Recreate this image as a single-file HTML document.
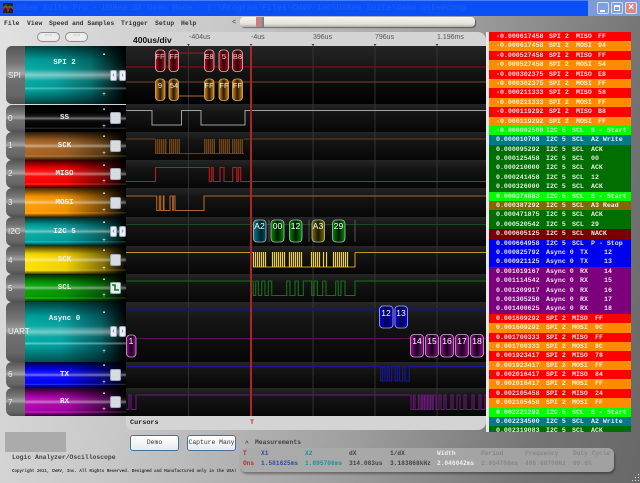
<!DOCTYPE html>
<html><head><meta charset="utf-8">
<style>
html,body{margin:0;padding:0;overflow:hidden}
body{width:640px;height:483px;position:relative;background:#888}
#w{position:absolute;left:0;top:0;width:640px;height:483px;overflow:hidden;filter:blur(.35px);background:linear-gradient(105deg,#e2e2e2 0%,#c8c8c8 30%,#a0a0a0 60%,#747474 85%,#686868 100%);font-family:"Liberation Mono",monospace;font-size:6.4px;color:#222}
.a{position:absolute;white-space:pre}
#tb{left:0;top:0;width:588px;height:16px;background:#0b50f4;border-top:1px solid #4a80ff;box-sizing:border-box}
#tc{left:588px;top:0;width:52px;height:16px;background:#7d9bd8}
.wb{position:absolute;top:2px;width:12px;height:12px;border:1px solid #dde;box-sizing:border-box;border-radius:2px;background:#7fa0e0}
.pill{position:absolute;top:32px;height:10px;width:23px;border-radius:5px;background:#ececec;border:1.5px solid #8e8e8e;box-sizing:border-box;color:#aaa;font-size:4px;text-align:center;line-height:7px}
.ch{position:absolute;left:6px;width:120px;overflow:hidden;border-radius:6px 0 0 6px}
.ch .g{position:absolute;left:0;top:0;bottom:0;width:19px;background:linear-gradient(to bottom,#555,#777 30%,#a4a4a4 48%,#707070 56%,#666 85%,#505050)}
.ch .c{position:absolute;left:19px;right:0;top:0;bottom:0}
.ch .o{position:absolute;left:19px;right:0;top:0;bottom:0;background:linear-gradient(to bottom,rgba(0,0,0,.75),rgba(0,0,0,.05) 28%,rgba(255,255,255,.1) 42%,rgba(255,255,255,.45) 50%,rgba(255,255,255,.05) 58%,rgba(0,0,0,0) 82%,rgba(255,255,255,.2) 86%,rgba(0,0,0,.1) 89%,rgba(0,0,0,.75))}
.ch .t{position:absolute;left:2px;font:8px "Liberation Sans",sans-serif;color:#f0f0f0}
.ch .l{position:absolute;left:19px;width:79px;text-align:center;color:#eee;font:bold 7.5px "Liberation Mono",monospace}
.ch .x,.ch .p{position:absolute;left:96px;width:4px;height:7px;color:#fff;font:6px/7px "Liberation Sans",sans-serif;text-align:center}
.ch .b{position:absolute;left:104px;width:11px;height:12px;background:#d8dce0;border:1px solid #9ab;box-sizing:border-box;border-radius:2px}
.ch .s{position:absolute;width:7px;height:11px;background:#eef;border:1px solid #9ab;box-sizing:border-box;border-radius:2px;color:#456;font:7px/9px "Liberation Sans",sans-serif;text-align:center}
#log{left:489px;top:32px;width:142px;height:400px;overflow:hidden;font:bold 6.6px/9.4px "Liberation Mono",monospace;color:#fff;white-space:normal}
#log div{position:relative;height:9.4px}
#log i{position:absolute;font-style:normal;white-space:pre;top:0;color:rgba(255,255,255,.88)}
#log i:nth-child(1){left:7px}
#log i:nth-child(2){left:57px}
#log i:nth-child(3){left:83px}
#log i:nth-child(4){left:102px}
#log .n i:nth-child(2){left:60px}
#log .n i:nth-child(3){left:87px}
#log .n i:nth-child(4){left:109px}
#log .n.L i:nth-child(2){left:57px}
#log .n.L i:nth-child(3){left:83px}
#log .n.L i:nth-child(4){left:102px}
#log .q i:nth-child(4){left:106px}
#log .u i:nth-child(3){left:91px}
#log .u i:nth-child(4){left:115px}
.R{background:#f00}.O{background:#ff8c00}.L{background:#0f0}.T{background:#007a85}.G{background:#006e00}.Y{background:#7d6a00}.D{background:#7a0000}.B{background:#0000f0}.P{background:#7c007c}
.btn{position:absolute;top:435px;height:16px;width:49px;background:linear-gradient(#fff,#e6ebee);border:1px solid #4a7098;border-radius:3px;box-sizing:border-box;text-align:center;font:6.4px/14px "Liberation Mono",monospace;color:#333}
#m{left:240px;top:448px;width:374px;height:24px;background:rgba(170,170,170,.85);border-radius:6px;box-shadow:1px 2px 2px rgba(0,0,0,.35);white-space:normal}
#m span{position:absolute;white-space:pre;font:bold 6.2px "Liberation Mono",monospace}
</style></head><body><div id="w">
<div class="a" id="tb"></div>
<div class="a" style="left:13px;top:4px;color:#1f5ef6;font-size:8.3px">USBee Suite Pro - USBee SX Demo Mode - C:\Program Files\CWAV Inc\USBee Suite\demo.usbeecomp</div>
<svg class="a" style="left:3px;top:3px" width="10" height="10"><rect width="10" height="10" fill="#222"/><path d="M0 7L3 2L5 8L7 3L10 6" stroke="#e02020" fill="none"/><path d="M0 4H10" stroke="#20a040"/></svg>
<div class="a" id="tc"></div>
<div class="wb" style="left:597px"><div style="position:absolute;left:2px;bottom:1px;width:5px;height:2px;background:#fff"></div></div>
<div class="wb" style="left:611px"><div style="position:absolute;left:2px;top:2px;width:6px;height:6px;border:1px solid #fff;border-top-width:2px;box-sizing:border-box"></div></div>
<div class="wb" style="left:625px;background:#d88a88;color:#fff;font:bold 10px/10px 'Liberation Sans',sans-serif;text-align:center">×</div>

<div class="a" style="left:4px;top:20px;font-weight:bold;color:#333">File</div>
<div class="a" style="left:27px;top:20px;font-weight:bold;color:#333">View</div>
<div class="a" style="left:49px;top:20px;font-weight:bold;color:#333">Speed and Samples</div>
<div class="a" style="left:121px;top:20px;font-weight:bold;color:#333">Trigger</div>
<div class="a" style="left:155px;top:20px;font-weight:bold;color:#333">Setup</div>
<div class="a" style="left:181px;top:20px;font-weight:bold;color:#333">Help</div>
<div class="a" style="left:232px;top:19px;color:#444;font-size:7px">&lt;</div>
<div class="a" style="left:240px;top:17px;width:235px;height:10px;border-radius:4px;background:linear-gradient(#f8f6f2,#e4e0da 70%,#b0aca8);box-shadow:1px 1px 1px rgba(0,0,0,.45)"></div>
<div class="a" style="left:256px;top:17px;width:5px;height:10px;background:#c88080"></div>
<div class="a" style="left:261px;top:17px;width:3px;height:10px;background:linear-gradient(to right,#d08060,#3a8ab8)"></div>
<div class="pill" style="left:37px">&lt;&lt;&lt;</div><div class="pill" style="left:65px">&gt;&gt;&gt;</div>

<div class="ch" style="top:46px;height:58px"><div class="c" style="background:linear-gradient(to right,#00a8a0,#009a98 30%,#006a6a 65%,#000)"></div><div class="o" style="background:linear-gradient(to bottom,rgba(0,0,0,.6),rgba(0,0,0,.05) 24%,rgba(255,255,255,.05) 40%,rgba(255,255,255,.5) 50%,rgba(255,255,255,.05) 60%,rgba(0,0,0,0) 70%,rgba(255,255,255,.3) 73%,rgba(0,0,0,0) 76%,rgba(0,0,0,.6))"></div><div class="g"></div><div class="t" style="top:25px;font-size:8px">SPI</div><div class="l" style="top:13px">SPI 2</div><div class="x" style="top:6px">▪</div><div class="p" style="top:46px">+</div><div class="s" style="left:104px;top:24px">‹</div><div class="s" style="left:113px;top:24px">›</div></div>

<div class="ch" style="top:105px;height:27px"><div class="c" style="background:#000"></div><div class="o"></div><div class="g"></div><div class="t" style="top:9px">0</div><div class="l" style="top:9px">SS</div><div class="x" style="top:2px">▪</div><div class="p" style="top:19px">+</div><div class="b" style="top:7px"></div></div>

<div class="ch" style="top:132px;height:28px"><div class="c" style="background:linear-gradient(to right,#a86420,#9a5c20 40%,#5a3810 75%,#000)"></div><div class="o"></div><div class="g"></div><div class="t" style="top:9px">1</div><div class="l" style="top:10px">SCK</div><div class="x" style="top:2px">▪</div><div class="p" style="top:19px">+</div><div class="b" style="top:8px"></div></div>

<div class="ch" style="top:160px;height:28px"><div class="c" style="background:linear-gradient(to right,#ff0000,#f00000 40%,#800000 75%,#000)"></div><div class="o"></div><div class="g"></div><div class="t" style="top:9px">2</div><div class="l" style="top:10px">MISO</div><div class="x" style="top:3px">▪</div><div class="p" style="top:19px">+</div><div class="b" style="top:8px"></div></div>

<div class="ch" style="top:188px;height:29px"><div class="c" style="background:linear-gradient(to right,#ff9a00,#f09000 40%,#704400 78%,#000)"></div><div class="o"></div><div class="g"></div><div class="t" style="top:10px">3</div><div class="l" style="top:11px">MOSI</div><div class="x" style="top:3px">▪</div><div class="p" style="top:20px">+</div><div class="b" style="top:9px"></div></div>

<div class="ch" style="top:217px;height:29px"><div class="c" style="background:linear-gradient(to right,#00a8a0,#009a98 40%,#005a5a 78%,#000)"></div><div class="o"></div><div class="g"></div><div class="t" style="top:10px;font-size:8px">I2C</div><div class="l" style="top:11px">I2C 5</div><div class="x" style="top:3px">▪</div><div class="p" style="top:21px">+</div><div class="s" style="left:104px;top:9px">‹</div><div class="s" style="left:113px;top:9px">›</div></div>

<div class="ch" style="top:246px;height:28px"><div class="c" style="background:linear-gradient(to right,#ffe000,#f0d000 40%,#806a00 78%,#000)"></div><div class="o"></div><div class="g"></div><div class="t" style="top:10px">4</div><div class="l" style="top:10px">SCK</div><div class="x" style="top:2px">▪</div><div class="p" style="top:20px">+</div><div class="b" style="top:8px"></div></div>

<div class="ch" style="top:274px;height:28px"><div class="c" style="background:linear-gradient(to right,#00a000,#009000 40%,#005000 78%,#000)"></div><div class="o"></div><div class="g"></div><div class="t" style="top:10px">5</div><div class="l" style="top:10px">SCL</div><div class="x" style="top:3px">▪</div><div class="p" style="top:19px">+</div><div class="b" style="top:8px;background:#e8f0e8"><svg width="9" height="10" style="display:block"><path d="M1 2H4V7H8" stroke="#0a7a30" stroke-width="1.6" fill="none"/></svg></div></div>

<div class="ch" style="top:302px;height:60px"><div class="c" style="background:linear-gradient(to right,#00a8a0,#00a0a0 35%,#005a60 75%,#000)"></div><div class="o" style="background:linear-gradient(to bottom,rgba(0,0,0,.6),rgba(0,0,0,.05) 24%,rgba(255,255,255,.05) 40%,rgba(255,255,255,.45) 50%,rgba(255,255,255,.05) 58%,rgba(0,0,0,0) 66%,rgba(255,255,255,.4) 69%,rgba(0,0,0,0) 72%,rgba(0,0,0,.5))"></div><div class="g"></div><div class="t" style="top:25px;font-size:8px">UART</div><div class="l" style="top:13px">Async 0</div><div class="x" style="top:8px">▪</div><div class="p" style="top:47px">+</div><div class="s" style="left:104px;top:24px">‹</div><div class="s" style="left:113px;top:24px">›</div></div>

<div class="ch" style="top:362px;height:26px"><div class="c" style="background:linear-gradient(to right,#0000ff,#0000f0 40%,#000080 75%,#000)"></div><div class="o"></div><div class="g"></div><div class="t" style="top:8px">6</div><div class="l" style="top:9px">TX</div><div class="x" style="top:1px">▪</div><div class="p" style="top:18px">+</div><div class="b" style="top:7px"></div></div>

<div class="ch" style="top:388px;height:28px;border-radius:6px 0 0 6px"><div class="c" style="background:linear-gradient(to right,#b000b0,#a000a0 40%,#500050 75%,#000)"></div><div class="o"></div><div class="g"></div><div class="t" style="top:10px">7</div><div class="l" style="top:10px">RX</div><div class="x" style="top:3px">▪</div><div class="p" style="top:19px">+</div><div class="b" style="top:8px"></div></div>

<div class="a" style="left:126px;top:32px;width:360px;height:14px;background:#d4d4d4;border-radius:6px 8px 0 0"></div>
<div class="a" style="left:133px;top:35px;font:bold 8.5px 'Liberation Sans',sans-serif;color:#111">400us/div</div>
<div class="a" style="left:189px;top:34px;font:7px 'Liberation Sans',sans-serif;color:#555">-404us</div>
<div class="a" style="left:251px;top:34px;font:7px 'Liberation Sans',sans-serif;color:#555">-4us</div>
<div class="a" style="left:313px;top:34px;font:7px 'Liberation Sans',sans-serif;color:#555">396us</div>
<div class="a" style="left:375px;top:34px;font:7px 'Liberation Sans',sans-serif;color:#555">796us</div>
<div class="a" style="left:437px;top:34px;font:7px 'Liberation Sans',sans-serif;color:#555">1.196ms</div>

<svg class="a" style="left:0;top:0" width="640" height="483" viewBox="0 0 640 483">
<defs>
<linearGradient id="bg" x1="0" y1="0" x2="0" y2="1"><stop offset="0" stop-color="#262626"/><stop offset=".3" stop-color="#151515"/><stop offset="1" stop-color="#070707"/></linearGradient>
<linearGradient id="bs" x1="0" y1="0" x2="0" y2="1"><stop offset="0" stop-color="#242424"/><stop offset="1" stop-color="#000"/></linearGradient>
<linearGradient id="gr"><stop offset="0" stop-color="#c01020"/><stop offset=".5" stop-color="#200004"/><stop offset="1" stop-color="#c01020"/></linearGradient>
<linearGradient id="go"><stop offset="0" stop-color="#d88a18"/><stop offset=".5" stop-color="#2a1800"/><stop offset="1" stop-color="#d88a18"/></linearGradient>
<linearGradient id="gt"><stop offset="0" stop-color="#008090"/><stop offset=".6" stop-color="#002028"/><stop offset="1" stop-color="#005060"/></linearGradient>
<linearGradient id="gg"><stop offset="0" stop-color="#009000"/><stop offset=".5" stop-color="#001800"/><stop offset="1" stop-color="#009000"/></linearGradient>
<linearGradient id="gy"><stop offset="0" stop-color="#807000"/><stop offset=".5" stop-color="#1a1600"/><stop offset="1" stop-color="#807000"/></linearGradient>
<linearGradient id="gb"><stop offset="0" stop-color="#0000f0"/><stop offset=".5" stop-color="#000040"/><stop offset="1" stop-color="#0000f0"/></linearGradient>
<linearGradient id="gp"><stop offset="0" stop-color="#901090"/><stop offset=".5" stop-color="#180018"/><stop offset="1" stop-color="#901090"/></linearGradient>
</defs>
<rect x="126" y="46" width="360" height="58" fill="url(#bs)"/>
<rect x="126" y="104" width="360" height="28" fill="url(#bg)"/>
<rect x="126" y="132" width="360" height="28" fill="url(#bg)"/>
<rect x="126" y="160" width="360" height="28" fill="url(#bg)"/>
<rect x="126" y="188" width="360" height="29" fill="url(#bg)"/>
<rect x="126" y="217" width="360" height="29" fill="url(#bg)"/>
<rect x="126" y="246" width="360" height="28" fill="url(#bg)"/>
<rect x="126" y="274" width="360" height="28" fill="url(#bg)"/>
<rect x="126" y="302" width="360" height="60" fill="url(#bg)"/>
<rect x="126" y="362" width="360" height="26" fill="url(#bg)"/>
<rect x="126" y="388" width="360" height="28" fill="url(#bg)"/>
<path d="M188.500 44V416M313 44V416M375 44V416M437 44V416" stroke="#3a3a3a" stroke-width=".8"/>
<path d="M187 44h3l-1.500 2zM311.500 44h3l-1.500 2zM373.500 44h3l-1.500 2zM435.500 44h3l-1.500 2zM249.500 44h3l-1.500 2z" fill="#444"/>

<g fill="none">
<path d="M126 67H486" stroke="#a00c10" stroke-width="1"/>
<path d="M179 53H204" stroke="#a01820" stroke-width="1"/>
<path d="M126 82H486" stroke="#6a3a1c" stroke-width="1.2"/>
<path d="M179 96H204" stroke="#b07028" stroke-width="1"/>
<path d="M126 110.500H152V125H181.500V110.500H201V125H245V110.500H486" stroke="#a0a0a0" stroke-width="1"/>
<path d="M126 139H155M244 139H486" stroke="#6a4020" stroke-width="1"/>
<path d="M155 153.500H244" stroke="#6a4020" stroke-width="1"/>
<path d="M155.500 139v14M157.500 139v14M159.500 139v14M161.500 139v14M163.500 139v14M165.500 139v14M169.500 139v14M171.500 139v14M173.500 139v14M175.500 139v14M177.500 139v14M179.500 139v14M204.500 139v14M206.500 139v14M208.500 139v14M210.500 139v14M212.500 139v14M214.500 139v14M219.500 139v14M221.500 139v14M223.500 139v14M225.500 139v14M227.500 139v14M229.500 139v14M232.500 139v14M234.500 139v14M236.500 139v14M238.500 139v14M240.500 139v14M242.500 139v14" stroke="#8a5a28" stroke-width="1"/>
<rect x="155" y="139" width="12" height="14" fill="#5a3414" opacity=".6"/><rect x="169" y="139" width="11" height="14" fill="#5a3414" opacity=".6"/><rect x="204" y="139" width="11" height="14" fill="#5a3414" opacity=".6"/><rect x="219" y="139" width="11" height="14" fill="#5a3414" opacity=".6"/><rect x="232" y="139" width="11" height="14" fill="#5a3414" opacity=".6"/>
<path d="M126 181.500H155.500V167.500H209.300V181.500H211.700V167.500H213.300V181.500H220V167.500H224V181.500H226.700V181.500H232.700V167.500H236.700V181.500H238.300V167.500H240.700V181.500H486" stroke="#c01818" stroke-width="1.100"/>
<path d="M126 196H156.700V210.500H159.300V196H160.700V210.500H163.300V196H164V210.500H170V196H172.700V210.500H173.300V196H175V210.500H177.700V210.500H204V196H486" stroke="#b0642c" stroke-width="1.100"/>
<path d="M126 224.500H486" stroke="#1c4a1c" stroke-width="1"/>
<path d="M309 220V242M269 220V242M355 220V242" stroke="#666" stroke-width=".8"/>
<path d="M126 252.500H253M355 252.500H486M253 267H355V252.500" stroke="#c09a28" stroke-width="1.100"/>
<path d="M253.500 252v15M255.500 252v15M257.500 252v15M259.500 252v15M261.500 252v15M263.500 252v15M265.500 252v15M272.500 252v15M274.500 252v15M276.500 252v15M278.500 252v15M280.500 252v15M282.500 252v15M284.500 252v15M289.500 252v15M291.500 252v15M293.500 252v15M295.500 252v15M297.500 252v15M299.500 252v15M301.500 252v15M311.500 252v15M313.500 252v15M315.500 252v15M317.500 252v15M319.500 252v15M323.500 252v15M326.500 252v15M333.500 252v15M335.500 252v15M337.500 252v15M339.500 252v15M341.500 252v15M343.500 252v15M345.500 252v15M347.500 252v15" stroke="#f0d038" stroke-width="1.200"/>
<path d="M126 281H253.300V295.500H255.700V281H258.300V295.500H261.700V281H265V295.500H268.300V281H271.700V295.500H286.700V281H290V295.500H295V281H298.300V295.500H303.300V281H311.700V295.500H314V281H317.300V295.500H322.700V281H326V295.500H335.700V281H338.300V295.500H341V281H345V295.500H355V281H486" stroke="#187018" stroke-width="1.100"/>
<path d="M126 309.500H486" stroke="#16166e" stroke-width="2"/>
<path d="M126 338.500H486" stroke="#5a1458" stroke-width="1"/>
<path d="M126 366.500H380.700V381H382.700V366.500H385V381H387.300V366.500H389.300V381H391.700V366.500H395V381H397.300V366.500H399.300V381H402.700V366.500H405V381H409.300V366.500H486" stroke="#1818a0" stroke-width="1.100"/>
<path d="M126 409.500H129V395H131V409.500H136V395H411V409.500H413.300V395H415V409.500H418.300V395H420V409.500H421.700V395H423V409.500H424.500V395H426V409.500H427.500V395H429V409.500H430.500V395H432V409.500H433.300V395H436V409.500H439V395H441V409.500H444V395H446V409.500H451V395H453V409.500H457V395H460V409.500H464V395H466V409.500H472V395H474V409.500H479V395H481V409.500H485V395H486" stroke="#6a1a7a" stroke-width="1.100"/>
</g>

<g stroke="#e0b8b8" stroke-width=".8" fill="url(#gr)">
<rect x="155.500" y="50" width="9.500" height="21.500" rx="3.500"/><rect x="169" y="50" width="9.500" height="21.500" rx="3.500"/><rect x="204.500" y="50" width="9.500" height="21.500" rx="3.500"/><rect x="219" y="50" width="9.500" height="21.500" rx="3.500"/><rect x="232.500" y="50" width="10" height="21.500" rx="3.500"/>
</g>
<g stroke="#d8b070" stroke-width=".8" fill="url(#go)">
<rect x="155.500" y="79" width="9.500" height="21.500" rx="3.500"/><rect x="169" y="79" width="9.500" height="21.500" rx="3.500"/><rect x="204.500" y="79" width="9.500" height="21.500" rx="3.500"/><rect x="219" y="79" width="9.500" height="21.500" rx="3.500"/><rect x="232.500" y="79" width="10" height="21.500" rx="3.500"/>
</g>
<g stroke="#a8c0b8" stroke-width=".8">
<rect x="253.500" y="220" width="12.500" height="22" rx="3.500" fill="url(#gt)"/>
<rect x="271" y="220" width="13" height="22" rx="3.500" fill="url(#gg)"/>
<rect x="289.500" y="220" width="12.500" height="22" rx="3.500" fill="url(#gg)"/>
<rect x="312" y="220" width="12.500" height="22" rx="3.500" fill="url(#gy)"/>
<rect x="332.500" y="220" width="12.500" height="22" rx="3.500" fill="url(#gg)"/>
<rect x="379.500" y="306" width="13.500" height="22" rx="3.500" fill="url(#gb)" stroke="#b0b0e8"/>
<rect x="395" y="306" width="12.500" height="22" rx="3.500" fill="url(#gb)" stroke="#b0b0e8"/>
</g>
<g stroke="#d0a8d0" stroke-width=".8" fill="url(#gp)">
<rect x="126.500" y="335" width="9.500" height="22" rx="3.500"/>
<rect x="410.500" y="334.500" width="13" height="22.500" rx="3.500"/><rect x="425.500" y="334.500" width="13" height="22.500" rx="3.500"/><rect x="440.500" y="334.500" width="13" height="22.500" rx="3.500"/><rect x="455.500" y="334.500" width="13" height="22.500" rx="3.500"/><rect x="470.500" y="334.500" width="13" height="22.500" rx="3.500"/>
</g>
<g font-family="Liberation Sans, sans-serif" font-size="7.500" fill="#eee" text-anchor="middle">
<text x="160" y="59" fill="#e8c8c8">FF</text><text x="174" y="59" fill="#e8c8c8">FF</text><text x="209" y="59" fill="#e8c8c8">E8</text><text x="224" y="59" fill="#e8c8c8">5</text><text x="237.500" y="59" fill="#e8c8c8">B8</text>
<text x="160" y="88">9</text><text x="174" y="88">54</text><text x="209" y="88">FF</text><text x="224" y="88">FF</text><text x="237.500" y="88">FF</text>
<g font-size="8.500" fill="#fff">
<text x="259.500" y="229">A2</text><text x="277.500" y="229">00</text><text x="295.500" y="229">12</text><text x="318" y="229">A3</text><text x="338.500" y="229">29</text>
<text x="386" y="316">12</text><text x="401" y="316">13</text>
<text x="131" y="344">1</text><text x="417" y="344">14</text><text x="432" y="344">15</text><text x="447" y="344">16</text><text x="462" y="344">17</text><text x="477" y="344">18</text>
</g></g>
<path d="M251 46V416" stroke="#a82828" stroke-width="2"/>
</svg>

<div class="a" style="left:126px;top:416px;width:360px;height:14px;background:#d4d4d4;border-radius:0 0 8px 6px"></div>
<div class="a" style="left:130px;top:419px;font-weight:bold;font-size:6.8px;color:#222">Cursors</div>
<div class="a" style="left:250px;top:419px;font-weight:bold;font-size:6.8px;color:#c03030">T</div>
<div class="a" style="left:486px;top:32px;width:3px;height:400px;background:#e8e8e8"></div>

<div class="a" id="log"><div class="R n"><i>-0.000617458</i><i>SPI 2</i><i>MISO</i><i>FF</i></div>
<div class="O n"><i>-0.000617458</i><i>SPI 2</i><i>MOSI</i><i>94</i></div>
<div class="R n"><i>-0.000527458</i><i>SPI 2</i><i>MISO</i><i>FF</i></div>
<div class="O n"><i>-0.000527458</i><i>SPI 2</i><i>MOSI</i><i>54</i></div>
<div class="R n"><i>-0.000302375</i><i>SPI 2</i><i>MISO</i><i>E8</i></div>
<div class="O n"><i>-0.000302375</i><i>SPI 2</i><i>MOSI</i><i>FF</i></div>
<div class="R n"><i>-0.000211333</i><i>SPI 2</i><i>MISO</i><i>58</i></div>
<div class="O n"><i>-0.000211333</i><i>SPI 2</i><i>MOSI</i><i>FF</i></div>
<div class="R n"><i>-0.000119292</i><i>SPI 2</i><i>MISO</i><i>B8</i></div>
<div class="O n"><i>-0.000119292</i><i>SPI 2</i><i>MOSI</i><i>FF</i></div>
<div class="L n"><i>-0.000002500</i><i>I2C 5</i><i>SCL</i><i>S - Start</i></div>
<div class="T"><i>0.000010708</i><i>I2C 5</i><i>SCL</i><i>A2 Write</i></div>
<div class="G"><i>0.000095292</i><i>I2C 5</i><i>SCL</i><i>ACK</i></div>
<div class="G"><i>0.000125458</i><i>I2C 5</i><i>SCL</i><i>00</i></div>
<div class="G"><i>0.000210000</i><i>I2C 5</i><i>SCL</i><i>ACK</i></div>
<div class="G"><i>0.000241458</i><i>I2C 5</i><i>SCL</i><i>12</i></div>
<div class="G"><i>0.000326000</i><i>I2C 5</i><i>SCL</i><i>ACK</i></div>
<div class="L"><i>0.000374083</i><i>I2C 5</i><i>SCL</i><i>S - Start</i></div>
<div class="Y"><i>0.000387292</i><i>I2C 5</i><i>SCL</i><i>A3 Read</i></div>
<div class="G"><i>0.000471875</i><i>I2C 5</i><i>SCL</i><i>ACK</i></div>
<div class="G"><i>0.000520542</i><i>I2C 5</i><i>SCL</i><i>29</i></div>
<div class="D"><i>0.000605125</i><i>I2C 5</i><i>SCL</i><i>NACK</i></div>
<div class="B"><i>0.000664958</i><i>I2C 5</i><i>SCL</i><i>P - Stop</i></div>
<div class="B u"><i>0.000825792</i><i>Async 0</i><i>TX</i><i>12</i></div>
<div class="B u"><i>0.000921125</i><i>Async 0</i><i>TX</i><i>13</i></div>
<div class="P u"><i>0.001019167</i><i>Async 0</i><i>RX</i><i>14</i></div>
<div class="P u"><i>0.001114542</i><i>Async 0</i><i>RX</i><i>15</i></div>
<div class="P u"><i>0.001209917</i><i>Async 0</i><i>RX</i><i>16</i></div>
<div class="P u"><i>0.001305250</i><i>Async 0</i><i>RX</i><i>17</i></div>
<div class="P u"><i>0.001400625</i><i>Async 0</i><i>RX</i><i>18</i></div>
<div class="R q"><i>0.001609292</i><i>SPI 2</i><i>MISO</i><i>FF</i></div>
<div class="O q"><i>0.001609292</i><i>SPI 2</i><i>MOSI</i><i>0C</i></div>
<div class="R q"><i>0.001700333</i><i>SPI 2</i><i>MISO</i><i>FF</i></div>
<div class="O q"><i>0.001700333</i><i>SPI 2</i><i>MOSI</i><i>8C</i></div>
<div class="R q"><i>0.001923417</i><i>SPI 2</i><i>MISO</i><i>78</i></div>
<div class="O q"><i>0.001923417</i><i>SPI 2</i><i>MOSI</i><i>FF</i></div>
<div class="R q"><i>0.002016417</i><i>SPI 2</i><i>MISO</i><i>84</i></div>
<div class="O q"><i>0.002016417</i><i>SPI 2</i><i>MOSI</i><i>FF</i></div>
<div class="R q"><i>0.002105458</i><i>SPI 2</i><i>MISO</i><i>24</i></div>
<div class="O q"><i>0.002105458</i><i>SPI 2</i><i>MOSI</i><i>FF</i></div>
<div class="L"><i>0.002221292</i><i>I2C 5</i><i>SCL</i><i>S - Start</i></div>
<div class="T"><i>0.002234500</i><i>I2C 5</i><i>SCL</i><i>A2 Write</i></div>
<div class="G"><i>0.002319083</i><i>I2C 5</i><i>SCL</i><i>ACK</i></div></div>

<div class="a" style="left:5px;top:432px;width:61px;height:20px;background:#ababab"></div>
<div class="a" style="left:12px;top:454px;font-weight:bold;color:#444">Logic Analyzer/Oscilloscope</div>
<div class="a" style="left:12px;top:470px;font-size:4.17px;color:#333;font-weight:bold">Copyright 2011, CWAV, Inc. All Rights Reserved. Designed and Manufactured only in the USA!</div>
<div class="btn" style="left:130px">Demo</div>
<div class="btn" style="left:187px">Capture Many</div>
<div class="a" style="left:245px;top:440px;font-weight:bold;font-size:6.4px;color:#444">^</div>
<div class="a" style="left:255px;top:439px;font-weight:bold;color:#444">Measurements</div>
<div class="a" id="m">
<span style="left:3px;top:2px;color:#b03030">T</span><span style="left:3px;top:12px;color:#b03030">Ons</span>
<span style="left:21px;top:2px;color:#30509a">X1</span><span style="left:21px;top:12px;color:#30509a">1.581625ms</span>
<span style="left:65px;top:2px;color:#209098">X2</span><span style="left:65px;top:12px;color:#209098">1.895708ms</span>
<span style="left:109px;top:2px;color:#444">dX</span><span style="left:109px;top:12px;color:#444">314.083us</span>
<span style="left:150px;top:2px;color:#444">1/dX</span><span style="left:150px;top:12px;color:#444">3.183868kHz</span>
<span style="left:197px;top:2px;color:#eee">Width</span><span style="left:197px;top:12px;color:#eee">2.046042ms</span>
<span style="left:241px;top:2px;color:#888">Period</span><span style="left:241px;top:12px;color:#888">2.054708ms</span>
<span style="left:285px;top:2px;color:#888">Frequency</span><span style="left:285px;top:12px;color:#888">486.68708Hz</span>
<span style="left:333px;top:2px;color:#888">Duty Cycle</span><span style="left:333px;top:12px;color:#888">99.6%</span>
</div>
<svg class="a" style="left:630px;top:473px" width="10" height="10"><path d="M8 1h1v1h-1zM5 4h1v1h-1zM8 4h1v1h-1zM2 7h1v1h-1zM5 7h1v1h-1zM8 7h1v1h-1z" fill="#ddd"/></svg>
</div></body></html>
